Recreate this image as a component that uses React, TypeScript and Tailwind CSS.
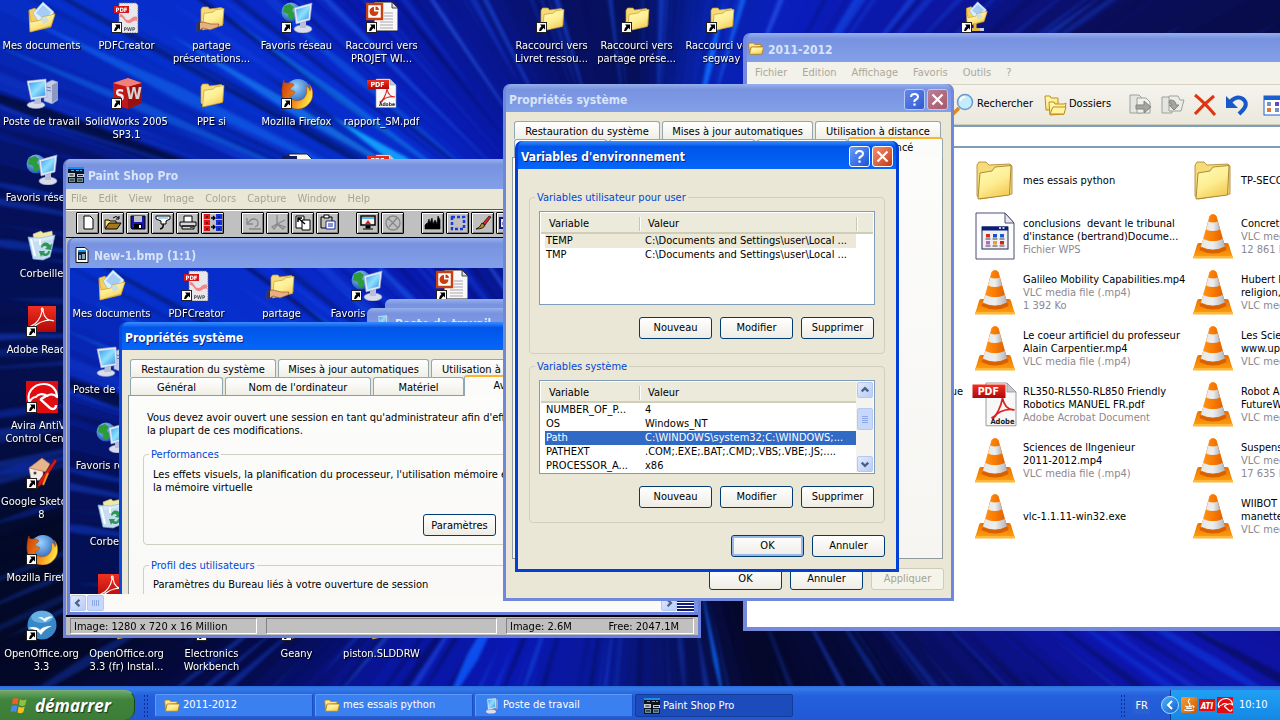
import React from "react";
import { clsx } from "clsx";

/* ---------- wallpaper ---------- */

const CX = 650;
const CY = 340;

const tones: [number, number, number, number][] = [
  [0, 8, 12, 90],
  [22, 16, 16, 150],
  [34, 14, 22, 178],
  [46, 10, 16, 110],
  [56, 5, 10, 60],
  [72, 5, 8, 42],
  [86, 8, 18, 100],
  [98, 8, 24, 150],
  [112, 10, 24, 180],
  [126, 9, 22, 160],
  [138, 5, 12, 80],
  [150, 4, 8, 40],
  [160, 3, 10, 40],
  [170, 4, 14, 70],
  [182, 4, 16, 84],
  [192, 5, 16, 90],
  [200, 6, 34, 170],
  [208, 6, 48, 205],
  [216, 8, 44, 205],
  [226, 8, 26, 175],
  [240, 8, 22, 140],
  [252, 7, 16, 100],
  [266, 6, 16, 90],
  [280, 8, 34, 170],
  [294, 10, 30, 190],
  [312, 12, 22, 160],
  [326, 10, 14, 90],
  [340, 6, 10, 60],
  [360, 8, 12, 90],
];

const glints: [number, number, string, number, number, number][] = [
  [213, 2.4, "#12a8ff", 170, 380, 0.9],
  [211, 1.4, "#1a8cf8", 200, 560, 0.6],
  [216, 1.2, "#1080f8", 180, 520, 0.6],
  [206, 1.4, "#1268f0", 260, 700, 0.6],
  [203, 1, "#1270f0", 300, 720, 0.5],
  [220, 1.2, "#1066f0", 200, 520, 0.5],
  [225, 0.8, "#2060f0", 200, 600, 0.5],
  [209, 0.7, "#03104c", 250, 800, 0.5],
  [218, 0.6, "#04145c", 200, 800, 0.5],
  [199, 1.2, "#030a34", 400, 800, 0.8],
  [236, 0.7, "#2a5cf0", 180, 500, 0.6],
  [243, 0.8, "#1c50e8", 180, 500, 0.6],
  [254, 0.8, "#1a4ae8", 200, 420, 0.6],
  [263, 0.8, "#1a50e8", 200, 420, 0.5],
  [272, 1, "#1848e0", 180, 420, 0.6],
  [283, 1.4, "#0d6cff", 180, 330, 0.9],
  [286, 1, "#1470ff", 220, 420, 0.7],
  [292, 1, "#2a54e8", 220, 500, 0.6],
  [303, 1.4, "#1248e0", 220, 500, 0.6],
  [309, 1, "#1a50e8", 280, 560, 0.5],
  [79, 0.8, "#0d68ff", 260, 400, 0.8],
  [62, 0.7, "#1a3cc0", 260, 500, 0.6],
  [118, 1.8, "#0d5cff", 270, 450, 0.8],
  [109, 0.8, "#1450e8", 270, 420, 0.5],
  [97, 0.6, "#1a44e0", 270, 420, 0.5],
  [123, 0.8, "#2048e0", 300, 500, 0.6],
  [130, 0.6, "#2458e8", 300, 500, 0.5],
  [35, 0.7, "#0c34d8", 450, 800, 0.6],
  [31, 0.8, "#0c38e0", 450, 800, 0.6],
  [167, 0.8, "#1038d0", 560, 700, 0.6],
  [163, 0.6, "#0c2cb0", 560, 700, 0.5],
  [172, 0.8, "#0c30c0", 560, 700, 0.5],
  [187, 0.8, "#1040d0", 560, 700, 0.5],
  [192, 0.6, "#0c3cd0", 560, 700, 0.5],
];

function toneAt(deg: number) {
  const i = Math.max(
    1,
    tones.findIndex((t) => t[0] >= deg),
  );
  const a = tones[i - 1];
  const b = tones[i];
  const k = (deg - a[0]) / (b[0] - a[0]);
  const c = [1, 2, 3].map((n) => Math.round(a[n] + (b[n] - a[n]) * k));
  return `rgb(${c[0]},${c[1]},${c[2]})`;
}

function ray(deg: number, width: number, r0: number, r1: number) {
  const p = (d: number, r: number) => {
    const t = (d * Math.PI) / 180;
    return `${(CX + Math.cos(t) * r).toFixed(1)},${(CY + Math.sin(t) * r).toFixed(1)}`;
  };
  const h = width / 2;
  return [p(deg, r0), p(deg - h, r0 + (r1 - r0) * 0.6), p(deg, r1), p(deg + h, r0 + (r1 - r0) * 0.6)].join(" ");
}

const noise = (n: number) => {
  const s = Math.sin(n * 91.17) * 43758.5453;
  return s - Math.floor(s);
};

function Wallpaper() {
  return (
    <svg
      viewBox="0 0 1280 720"
      preserveAspectRatio="xMidYMid slice"
      className="absolute inset-0 h-full w-full bg-[#06104c]"
      aria-hidden="true"
    >
      {Array.from({ length: 180 }, (_, i) => {
        const d = i * 2;
        const t0 = ((d - 0.3) * Math.PI) / 180;
        const t1 = ((d + 2.3) * Math.PI) / 180;
        return (
          <polygon
            key={i}
            fill={toneAt(d)}
            points={`${CX},${CY} ${CX + 1000 * Math.cos(t0)},${CY + 1000 * Math.sin(t0)} ${CX + 1000 * Math.cos(t1)},${CY + 1000 * Math.sin(t1)}`}
          />
        );
      })}
      <g className="blur-[1.5px]">
        {Array.from({ length: 330 }, (_, i) => {
          const r0 = 170 + noise(i + 7) * 380;
          return (
            <polygon
              key={i}
              points={ray(i * 1.09 + noise(i), 0.3 + noise(i + 50) * 0.8, r0, r0 + 120 + noise(i + 90) * 300)}
              fill={noise(i + 200) > 0.5 ? "#1a50f0" : "#02062c"}
              opacity={0.2 + noise(i + 33) * 0.22}
            />
          );
        })}
        {glints.map(([d, w, c, a, b, o]) => (
          <polygon key={d} points={ray(d, w, a, b)} fill={c} opacity={o} />
        ))}
      </g>
    </svg>
  );
}

/* ---------- icons ---------- */

type IconProps = { className?: string };

function Svg({ className, box = 32, children }: IconProps & { box?: number; children: React.ReactNode }) {
  return (
    <svg viewBox={`0 0 ${box} ${box}`} className={clsx("shrink-0", className)} aria-hidden="true">
      {children}
    </svg>
  );
}

function SharedPaints() {
  return (
    <svg className="absolute h-0 w-0" aria-hidden="true">
      <defs>
        <linearGradient id="gold" x1="0" y1="0" x2="0.5" y2="1">
          <stop offset="0" stopColor="#fffcb8" />
          <stop offset="0.6" stopColor="#fdee94" />
          <stop offset="1" stopColor="#f4cf5c" />
        </linearGradient>
        <linearGradient id="screen" x1="0" y1="0" x2="1" y2="1">
          <stop offset="0" stopColor="#3c9ce8" />
          <stop offset="0.5" stopColor="#8ee0ff" />
          <stop offset="1" stopColor="#3a90e0" />
        </linearGradient>
        <radialGradient id="globe" cx="0.4" cy="0.3" r="0.8">
          <stop offset="0" stopColor="#9cd4ff" />
          <stop offset="1" stopColor="#0c48a8" />
        </radialGradient>
        <linearGradient id="fox" x1="0" y1="0" x2="1" y2="0.4">
          <stop offset="0" stopColor="#c83c08" />
          <stop offset="0.6" stopColor="#f08818" />
          <stop offset="1" stopColor="#ffe040" />
        </linearGradient>
        <linearGradient id="cone" x1="0" y1="0" x2="1" y2="0">
          <stop offset="0" stopColor="#ff9820" />
          <stop offset="0.5" stopColor="#fa7c00" />
          <stop offset="1" stopColor="#d85a00" />
        </linearGradient>
        <linearGradient id="coneBase" x1="0" y1="0" x2="0" y2="1">
          <stop offset="0" stopColor="#e87000" />
          <stop offset="1" stopColor="#ffa010" />
        </linearGradient>
        <linearGradient id="coneWhite" x1="0" y1="0" x2="1" y2="0">
          <stop offset="0" stopColor="#e4e8ec" />
          <stop offset="0.5" stopColor="#eeeeee" />
          <stop offset="1" stopColor="#b0b4bc" />
        </linearGradient>
        <linearGradient id="redPaint" x1="0" y1="0" x2="0" y2="1">
          <stop offset="0" stopColor="#f03020" />
          <stop offset="1" stopColor="#b00808" />
        </linearGradient>
        <linearGradient id="java" x1="0" y1="0" x2="1" y2="1">
          <stop offset="0" stopColor="#f8a030" />
          <stop offset="1" stopColor="#c85808" />
        </linearGradient>
      </defs>
    </svg>
  );
}

const folderShape = (
  <>
    <path d="M5 9.500 6.500 7h5.500l1.500 2 12-1.500 1.500 1.500v15L7 28 5 26z" fill="#f5dc78" stroke="#c89c30" strokeWidth="0.7" />
    <path d="M8 13.500 17.500 12l1.500-2 9-1.500-1.500 17L6.500 30z" fill="url(#gold)" stroke="#c89c30" strokeWidth="0.7" />
  </>
);

const FolderIcon = (p: IconProps) => <Svg {...p}>{folderShape}</Svg>;

const LargeFolderIcon = (p: IconProps) => (
  <Svg box={48} {...p}>
    <path d="M6 9 8 6h7l3 3 21-1 2 2v28L9 43 6 40z" fill="#f5dc78" stroke="#a88028" strokeWidth="0.8" />
    <path d="M9 17 21 15l3-4 16-1.500-1.500 29.500L7 43z" fill="url(#gold)" stroke="#a88028" strokeWidth="0.9" />
  </Svg>
);

const SmallFolder = (p: IconProps) => (
  <Svg box={16} {...p}>
    <path d="M.7 3.500Q.7 2 2 2h3.500l1.300 1.500H13v2.200L3 6.500 1.600 13z" fill="#ffe48a" stroke="#b07c18" strokeWidth="0.8" />
    <path d="M1.500 13.300 3.200 6h11.600q.8 0 .5 1l-1.500 6.300z" fill="url(#gold)" stroke="#b07c18" strokeWidth="0.8" />
  </Svg>
);

const docsShape = (
  <>
    <path d="M3 9l6-2 2 3 18 3-4 13L4 31z" fill="#f5cf60" stroke="#c89020" strokeWidth="0.6" />
    <path d="M7 12 17 1l11 10-4 10-9 4z" fill="#dcefff" stroke="#88b4e0" strokeWidth="0.6" />
    <path d="M10 12 17 4l8 7-6 8z" fill="#a4ccf4" />
    <path d="M3 10l2 11 10-2 1-3 13-3-4 12L4 31z" fill="url(#gold)" stroke="#c89020" strokeWidth="0.6" />
    <path d="m15 17 5-2 3 5-6 3z" fill="#b8dcf8" opacity="0.7" />
  </>
);

const DocsIcon = (p: IconProps) => <Svg {...p}>{docsShape}</Svg>;

const NetDocsIcon = (p: IconProps) => (
  <Svg {...p}>
    <g transform="translate(3 0) scale(.8)">{docsShape}</g>
    <path d="M14 22v6M9 28.500h12" stroke="#e0b840" strokeWidth="3" />
    <path d="M19 28.500h4" stroke="#c8d0dc" strokeWidth="3" />
  </Svg>
);

const PdfCreatorIcon = (p: IconProps) => (
  <Svg {...p}>
    <path d="M8 2h17l2 2v28H8z" fill="#e8e8ec" stroke="#707078" strokeDasharray="1.5 1" strokeWidth="1" />
    <path d="M9 13c5 0 4 6 8 6s4-5 9-3v4c-4-2-5 3-9 2s-4-6-8-6z" fill="#f08888" />
    <rect x="3" y="5" width="15" height="7" fill="#d81818" />
    <text x="10.500" y="10.900" textAnchor="middle" className="font-bold" fontSize="6" fill="#fff">PDF</text>
    <text x="18.500" y="30" textAnchor="middle" className="font-bold" fontSize="5" fill="#505058">PWP</text>
  </Svg>
);

const ShareFolderIcon = (p: IconProps) => (
  <Svg {...p}>
    <g transform="translate(0 -1)">{folderShape}</g>
    <path d="M1 22l6-1 8 2h8l-1 3-8 3-7-2-6 4z" fill="#e8b080" stroke="#804818" strokeWidth="0.6" />
    <path d="M1 21h3v10H1z" fill="#303848" />
  </Svg>
);

const NetworkIcon = (p: IconProps) => (
  <Svg {...p}>
    <circle cx="10" cy="11" r="9.500" fill="url(#globe)" />
    <path d="M3 5l6-2 4 3-2 4 3 3-3 6-3-1-1-5-5-2z" fill="#2c9c38" />
    <ellipse cx="22" cy="28" rx="9" ry="4" fill="#d8dcec" stroke="#9098b8" strokeWidth="0.6" />
    <path d="M19 20l6-1v8h-6z" fill="#b8c0d8" />
    <path d="M13 7l18-5-2 17-14 4z" fill="#e4e8f8" stroke="#98a4c8" strokeWidth="0.6" />
    <path d="M15 8.500 29 4.500 27.500 17.500 16.500 20.500z" fill="url(#screen)" />
  </Svg>
);

const PptIcon = (p: IconProps) => (
  <Svg {...p}>
    <path d="M8 1h18l6 6v23H8z" fill="#f8f8f8" stroke="#202020" />
    <path d="M26 1v6h6z" fill="#d8d8e0" stroke="#202020" strokeWidth="0.8" />
    <path d="M18 12h9M18 15h9M18 18h9M14 21h13M14 24h13M14 27h13" stroke="#a8a8b0" />
    <rect x="1" y="3" width="15" height="15" fill="#fff" stroke="#c84010" strokeWidth="2.500" />
    <path d="M8 6a4.500 4.500 0 1 0 4.500 4.500H8z" fill="#c84010" />
    <path d="M9.500 5.500a4 4 0 0 1 3.500 3.500H9.500z" fill="#c84010" />
  </Svg>
);

const WordIcon = (p: IconProps) => (
  <Svg {...p}>
    <path d="M8 1h18l6 6v23H8z" fill="#f8f8f8" stroke="#202020" />
    <path d="M1 3h15v15H1z" fill="#101c60" />
  </Svg>
);

const ComputerIcon = (p: IconProps) => (
  <Svg {...p}>
    <path d="M18 7l8-4 6 2v18l-6 4-8-3z" fill="#c4cce8" stroke="#7c88b0" strokeWidth="0.6" />
    <path d="M26 8v18l6-4V5z" fill="#8c98c4" />
    <path d="M20 10l5 1M20 13l5 1" stroke="#6878a8" />
    <ellipse cx="10" cy="28" rx="9" ry="3.500" fill="#d8dcec" stroke="#9098b8" strokeWidth="0.6" />
    <path d="M9 20h6v7H8z" fill="#b8c0d8" />
    <path d="M1 4l19-2 1 18-16 3z" fill="#e4e8f8" stroke="#98a4c8" strokeWidth="0.6" />
    <path d="M3 6l15.500-2 1 14.500L6 20.500z" fill="url(#screen)" />
  </Svg>
);

const SmallComputer = (p: IconProps) => (
  <Svg box={16} {...p}>
    <ellipse cx="7" cy="13.500" rx="5" ry="2" fill="#d8dcec" />
    <path d="M3 1l9-1v10l-8 2z" fill="#e4e8f8" stroke="#7c90c8" strokeWidth="0.5" />
    <path d="M4 2l7-1v8l-6 1.500z" fill="url(#screen)" />
    <path d="M12 1l2 1v8l-2 2z" fill="#90a0cc" />
  </Svg>
);

const SolidWorksIcon = (p: IconProps) => (
  <Svg {...p}>
    <path d="M2 6 17 1l14 5v20l-14 6L2 27z" fill="#c01818" />
    <path d="M2 6 17 1l14 5-14 4z" fill="#f08078" />
    <path d="M17 10 31 6v20l-14 6z" fill="#981010" />
    <text x="4" y="24" fontSize="15" className="font-bold" fill="#f4f0f0">S</text>
    <text x="15" y="22" fontSize="16" className="font-bold" fill="#d8d4d4">W</text>
  </Svg>
);

const FirefoxIcon = (p: IconProps) => (
  <Svg {...p}>
    <circle cx="17" cy="15" r="13" fill="url(#globe)" />
    <path
      d="M3 3c0 3 1 3 4 3 2 0 5 0 6 2-1 2-4 2-4 5 1 1 4 0 5 2-1 3-4 3-5 4 1 4 6 6 11 4 5-2 7-8 5-14 3 2 4 3 4 5 1-3 0-5-1-7 4 4 5 11 2 17-3 5-8 8-13 8C8 32 1 25 1 15 1 10 2 5 3 3z"
      fill="url(#fox)"
      stroke="#b84408"
      strokeWidth="0.5"
    />
  </Svg>
);

const PdfIcon = (p: IconProps) => (
  <Svg {...p}>
    <path d="M10 2h14l6 6v22.500H10z" fill="#f8f8f8" stroke="#909098" strokeWidth="0.6" />
    <path d="M24 2v6h6z" fill="#c8c8d0" stroke="#909098" strokeWidth="0.5" />
    <path
      d="M14 25c3-1 6-7 7-13-2-2 0-3 0 0 1 5 4 8 8 8-3-1-9 0-12 3-1 2-3 3-3 2z"
      fill="none"
      stroke="#e02020"
      strokeWidth="1.100"
    />
    <rect x="1" y="3" width="22" height="9" fill="url(#redPaint)" />
    <text x="11.500" y="10" textAnchor="middle" fontSize="7" className="font-bold" fill="#fff">PDF</text>
    <text x="29" y="29" textAnchor="end" fontSize="5" className="font-bold" fill="#202020">Adobe</text>
  </Svg>
);

const RecycleIcon = (p: IconProps) => (
  <Svg {...p}>
    <path d="M7 5l8-3 2 2 9-2 1 8-19 3z" fill="#f0e8a8" stroke="#c0b878" strokeWidth="0.5" />
    <path d="M2 8l12 1 15-3-5 22-7 3-10-1z" fill="#d4ecfc" stroke="#88b8e0" strokeWidth="0.7" opacity="0.93" />
    <path d="M5 10l4 17M14 10v6" stroke="#f8fcff" strokeWidth="2" />
    <path d="M15 18c1-5 6-6 9-2l2-1-1 6-6-1 2-2c-2-2-4-1-5 1zM24 22c0 5-5 6-8 4l-1 2-2-6 6 0-1 2c2 1 4 0 4-2z" fill="#2c9850" />
  </Svg>
);

const AcrobatIcon = (p: IconProps) => (
  <Svg {...p}>
    <rect x="2" y="1" width="28" height="26" fill="url(#redPaint)" />
    <path d="M5 21c6-2 10-9 11-15-2-4 2-4 1 0 1 6 5 10 11 10-5-2-13 0-18 4-2 2-4 3-5 1z" fill="none" stroke="#fff" strokeWidth="1.200" />
  </Svg>
);

const AviraIcon = (p: IconProps) => (
  <Svg {...p}>
    <rect width="32" height="32" fill="#e00c10" />
    <path
      d="M3.500 21C0 12 7 3 18 3c8 0 13 6 13 13-3-3-7-3-10-1-4-3-9-2-11 1-3 0-5 2-6.500 5z"
      fill="none"
      stroke="#fff"
      strokeWidth="2.200"
      strokeLinejoin="round"
    />
    <path d="M20 15c-3 2-6 3-5 4l9 8c3 2 6 1 6-3" fill="none" stroke="#fff" strokeWidth="2.400" />
  </Svg>
);

const SketchUpIcon = (p: IconProps) => (
  <Svg {...p}>
    <path d="M3 11 13 5l4 7v12L5 22z" fill="#f4ece4" stroke="#a89888" strokeWidth="0.7" />
    <path d="M3 11 16 1l8 6-4 8z" fill="#e8b48c" stroke="#a86c48" strokeWidth="0.7" />
    <circle cx="9" cy="16" r="1.500" fill="#504038" />
    <path d="m29 2 2 2-15 23-5 4 2-7z" fill="#d81818" stroke="#601008" strokeWidth="0.6" />
    <path d="m22 16-5 12" stroke="#e89020" strokeWidth="2" />
  </Svg>
);

const OpenOfficeIcon = (p: IconProps) => (
  <Svg {...p}>
    <circle cx="16" cy="16" r="14.500" fill="#3888c8" />
    <ellipse cx="16" cy="8" rx="11" ry="6" fill="#68b0e0" />
    <path d="M12 9c3-2 5-1 6 1 2-2 5-3 9-2-4 1-6 3-8 5-2-2-4-4-7-4zM2 19c5-2 10-1 12 2 3-3 6-4 12-4-5 2-9 5-11 9-3-4-7-6-13-7z" fill="#fff" />
  </Svg>
);

const ConeIcon = (p: IconProps) => (
  <Svg box={48} {...p}>
    <path d="M10 31h28q1.500 0 2 2l4 13H4l4-13q.5-2 2-2z" fill="url(#coneBase)" />
    <path d="M4 44h40v2.500H4z" fill="#ffb838" />
    <path d="M20.500 4Q24 0 27.500 4l9 32q-12 6-25 0z" fill="url(#cone)" />
    <path d="M19.300 9.500q4.700 2 9.400 0l2.300 8q-7 3-14 0z" fill="url(#coneWhite)" />
    <path d="M14.300 27q9.700 4.500 19.400 0l2.300 7.500q-12 6-24 0z" fill="url(#coneWhite)" />
    <path d="M11.800 35q12.200 6 24.400 0l1.300 3q-13.500 7-27 0z" fill="#d86000" />
  </Svg>
);

const WpsIcon = (p: IconProps) => (
  <Svg box={48} {...p}>
    <path d="M5 1h29l9 10v36H5z" fill="#fdfdff" stroke="#4c5070" />
    <path d="M34 1v10h9z" fill="#e8e8f0" stroke="#4c5070" />
    <rect x="11" y="15" width="26" height="22" fill="#f0f0f4" stroke="#202848" />
    <rect x="11" y="14.500" width="26" height="4" fill="#081c80" />
    <path d="M28 16h2M31.500 16h2" stroke="#fff" strokeWidth="1.500" />
    {[
      ["#d03018", "#1850c8", "#1860d0"],
      ["#c060d0", "#e8a030", "#d02020"],
    ].map((row, y) =>
      row.map((c, x) => (
        <g key={`${x}${y}`}>
          <rect x={15 + x * 7} y={22 + y * 7} width="4" height="3.500" fill={c} />
          <path d={`M${14.5 + x * 7} ${27 + y * 7}h5`} stroke="#404048" />
        </g>
      )),
    )}
  </Svg>
);

const PspIcon = (p: IconProps) => (
  <Svg box={16} {...p}>
    <rect width="16" height="16" fill="#0c1420" />
    <path d="M0 0h16v2H0z" fill="#1890f0" />
    <path d="M3 3h3v1H3zM8 3h3v1H8zM12 3h2v1h-2z" fill="#38b0ff" />
    <path d="M0 6h7v4H0zM9 7h7v3H9z" fill="#c8ccd0" />
    <path d="M1.500 7.500h4v1h-4zM10 8h5v1h-5z" fill="#101828" />
    <path d="M1 11h6v4H1zM9 11h6v4H9z" fill="#6c8c98" />
    <path d="M2 12.500h4v1H2zM10 12.500h4v1h-4z" fill="#0c1420" />
  </Svg>
);

const BmpIcon = (p: IconProps) => (
  <Svg box={16} {...p}>
    <path d="M2 .5h9l3 3v12H2z" fill="#fff" stroke="#101010" />
    <rect x="4" y="3" width="8" height="10" fill="#102038" />
    <path d="M4 3h8v2H4z" fill="#1890f0" />
    <path d="M5 8h2v4H5zM8 7h3v5H8z" fill="#88a8b8" />
  </Svg>
);

function ShortcutArrow() {
  return (
    <svg viewBox="0 0 11 11" className="absolute bottom-0 left-0 h-[11px] w-[11px]" aria-hidden="true">
      <rect x=".5" y=".5" width="10" height="10" fill="#fff" stroke="#202020" />
      <path d="M4 2.500h5v5L7.400 6 5 9H3q0-3 2.500-4.800z" fill="#000" />
    </svg>
  );
}

/* ---------- desktop icons ---------- */

type DesktopItem = { col: number; row: number; label?: string; icon: React.FC<IconProps>; link?: boolean };

const desktopItems: DesktopItem[] = [
  { col: 0, row: 0, label: "Mes documents", icon: DocsIcon },
  { col: 1, row: 0, label: "PDFCreator", icon: PdfCreatorIcon, link: true },
  { col: 2, row: 0, label: "partage\nprésentations...", icon: ShareFolderIcon },
  { col: 3, row: 0, label: "Favoris réseau", icon: NetworkIcon, link: true },
  { col: 4, row: 0, label: "Raccourci vers\nPROJET WI...", icon: PptIcon, link: true },
  { col: 6, row: 0, label: "Raccourci vers\nLivret ressou...", icon: FolderIcon, link: true },
  { col: 7, row: 0, label: "Raccourci vers\npartage prése...", icon: FolderIcon, link: true },
  { col: 8, row: 0, label: "Raccourci vers\nsegway", icon: FolderIcon, link: true },
  { col: 11, row: 0, icon: NetDocsIcon, link: true },
  { col: 0, row: 1, label: "Poste de travail", icon: ComputerIcon },
  { col: 1, row: 1, label: "SolidWorks 2005\nSP3.1", icon: SolidWorksIcon, link: true },
  { col: 2, row: 1, label: "PPE si", icon: FolderIcon },
  { col: 3, row: 1, label: "Mozilla Firefox", icon: FirefoxIcon, link: true },
  { col: 4, row: 1, label: "rapport_SM.pdf", icon: PdfIcon },
  { col: 0, row: 2, label: "Favoris réseau", icon: NetworkIcon },
  { col: 3, row: 2, icon: WordIcon },
  { col: 4, row: 2, icon: PdfIcon },
  { col: 0, row: 3, label: "Corbeille", icon: RecycleIcon },
  { col: 0, row: 4, label: "Adobe Reader", icon: AcrobatIcon, link: true },
  { col: 0, row: 5, label: "Avira AntiVir\nControl Center", icon: AviraIcon, link: true },
  { col: 0, row: 6, label: "Google Sketch...\n8", icon: SketchUpIcon, link: true },
  { col: 0, row: 7, label: "Mozilla Firefox", icon: FirefoxIcon, link: true },
  { col: 0, row: 8, label: "OpenOffice.org\n3.3", icon: OpenOfficeIcon, link: true },
  { col: 1, row: 8, label: "OpenOffice.org\n3.3 (fr) Instal...", icon: FolderIcon },
  { col: 2, row: 8, label: "Electronics\nWorkbench", icon: AcrobatIcon, link: true },
  { col: 3, row: 8, label: "Geany", icon: DocsIcon, link: true },
  { col: 4, row: 8, label: "piston.SLDDRW", icon: FolderIcon },
];

const capturedItems: DesktopItem[] = [
  { col: 0, row: 0, label: "Mes documents", icon: DocsIcon },
  { col: 1, row: 0, label: "PDFCreator", icon: PdfCreatorIcon, link: true },
  { col: 2, row: 0, label: "partage", icon: ShareFolderIcon },
  { col: 3, row: 0, label: "Favoris réseau", icon: NetworkIcon, link: true },
  { col: 4, row: 0, icon: PptIcon, link: true },
  { col: 0, row: 1, label: "Poste de travail", icon: ComputerIcon },
  { col: 0, row: 2, label: "Favoris réseau", icon: NetworkIcon },
  { col: 0, row: 3, label: "Corbeille", icon: RecycleIcon },
  { col: 0, row: 4, icon: AcrobatIcon },
];

function DesktopIcons({ items }: { items: DesktopItem[] }) {
  return (
    <>
      {items.map(({ col, row, label, icon: Icon, link }) => (
        <div
          key={`${col}-${row}`}
          className="absolute flex w-[85px] flex-col items-center gap-1.5 pt-px"
          style={{ left: col * 85 - 1, top: row * 76 }}
        >
          <div className="relative h-8 w-8">
            <Icon className="h-8 w-8" />
            {link && <ShortcutArrow />}
          </div>
          {label && (
            <span className="text-center leading-[13px] whitespace-pre text-white [text-shadow:1px_1px_1px_#000]">
              {label}
            </span>
          )}
        </div>
      ))}
    </>
  );
}

/* ---------- window parts ---------- */

function TitleButton({ kind, active }: { kind: "help" | "close"; active: boolean }) {
  return (
    <button
      type="button"
      aria-label={kind === "help" ? "Aide" : "Fermer"}
      className={clsx(
        "flex h-[21px] w-[21px] items-center justify-center rounded-[3px] border",
        active ? "border-white" : "border-[#b8c8f4]",
        kind === "help" && (active ? "bg-linear-to-br from-[#6a9cf8] to-[#1c50d8]" : "bg-linear-to-br from-[#6088ec] to-[#3458d0]"),
        kind === "close" && (active ? "bg-linear-to-br from-[#f09070] to-[#c83410]" : "bg-linear-to-br from-[#b88098] to-[#a85868]"),
      )}
    >
      <svg viewBox="0 0 15 15" className="h-[15px] w-[15px]" aria-hidden="true">
        {kind === "help" ? (
          <>
            <path d="M4 5q0-3 3.500-3T11 4.800Q11 6.500 9 7.500T7.500 10" fill="none" stroke="#fff" strokeWidth="2" />
            <rect x="6.400" y="11.500" width="2.200" height="2.200" fill="#fff" />
          </>
        ) : (
          <path d="m2.500 2.500 10 10m0-10-10 10" stroke="#fff" strokeWidth="2.200" />
        )}
      </svg>
    </button>
  );
}

function TitleBar({
  title,
  icon,
  active = false,
  controls = false,
  className,
}: {
  title?: string;
  icon?: React.ReactNode;
  active?: boolean;
  controls?: boolean;
  className?: string;
}) {
  return (
    <header
      className={clsx(
        "flex h-7 shrink-0 items-center gap-1 rounded-t-[6px] pt-0.5",
        active
          ? "bg-linear-to-b from-[#3a8cff] via-[#0055e8] via-20% to-[#0566fa]"
          : "bg-linear-to-b from-[#96b0ec] via-[#7892e0] via-20% to-[#82a0e8]",
        className,
      )}
    >
      {icon}
      <h2
        className={clsx(
          "grow pt-0.5 text-[12px] font-bold whitespace-nowrap",
          active ? "text-white [text-shadow:1px_1px_#0a1e80]" : "text-[#d8e4f8]",
        )}
      >
        {title}
      </h2>
      {controls && (
        <div className="flex gap-0.5">
          <TitleButton kind="help" active={active} />
          <TitleButton kind="close" active={active} />
        </div>
      )}
    </header>
  );
}

function XpButton({
  children,
  isDefault,
  disabled,
}: {
  children: React.ReactNode;
  isDefault?: boolean;
  disabled?: boolean;
}) {
  return (
    <button
      type="button"
      disabled={disabled}
      className={clsx(
        "h-[22px] w-[73px] rounded-[3px] border bg-linear-to-b pt-px",
        disabled
          ? "border-[#cfccba] from-[#f5f4ea] to-[#f5f4ea] text-[#a5a394]"
          : "border-[#003c74] from-white to-[#eeece4] text-black",
        isDefault && "shadow-[inset_0_0_0_2px_#98b8ea]",
      )}
    >
      {children}
    </button>
  );
}

function Group({ title, className, children }: { title: string; className?: string; children: React.ReactNode }) {
  return (
    <fieldset className={clsx("rounded-[4px] border border-[#d0d0bf]", className)}>
      <legend className="-ml-1 px-0.5 leading-[13px] text-[#0046d5]">{title}</legend>
      {children}
    </fieldset>
  );
}

function ScrollArrow({ dir, className }: { dir: "up" | "down" | "left" | "right"; className?: string }) {
  const d = {
    up: "m4 9 3.500-3.500L11 9",
    down: "m4 6 3.500 3.500L11 6",
    left: "M9 4 5.500 7.500 9 11",
    right: "m6 4 3.500 3.500L6 11",
  }[dir];
  return (
    <button
      type="button"
      aria-label={dir}
      className={clsx("h-4 w-4 rounded-[2px] border border-[#b4c8f0] bg-linear-to-br from-[#e0eafe] to-[#b8ccf8]", className)}
    >
      <svg viewBox="0 0 15 15" className="h-full w-full" aria-hidden="true">
        <path d={d} fill="none" stroke="#4d6185" strokeWidth="2.500" />
      </svg>
    </button>
  );
}

/* ---------- system properties ---------- */

const tabStyle = "h-full rounded-t-[3px] border border-b-0 border-[#91a7b4] bg-linear-to-b from-white to-[#f0efe6] pt-0.5";

function SystemProperties({ active, className, children }: { active: boolean; className?: string; children?: React.ReactNode }) {
  return (
    <section
      className={clsx(
        "absolute w-[451px] rounded-t-[7px] border-x-3 border-b-3",
        active ? "border-[#0a48dc] bg-[#0a48dc]" : "border-[#7088dc] bg-[#7088dc]",
        className,
      )}
    >
      <TitleBar title="Propriétés système" active={active} controls className="px-[3px]" />
      <div className="bg-[#ebe7d7] pt-[9px] pr-2 pb-2 pl-1.5">
        <div className="flex h-[18px] gap-0.5 pl-0.5" role="tablist">
          <button type="button" role="tab" className={clsx(tabStyle, "w-[146px]")}>Restauration du système</button>
          <button type="button" role="tab" className={clsx(tabStyle, "w-[151px]")}>Mises à jour automatiques</button>
          <button type="button" role="tab" className={clsx(tabStyle, "w-[126px]")}>Utilisation à distance</button>
        </div>
        <div className="flex h-[18px] pl-0.5" role="tablist">
          <button type="button" role="tab" className={clsx(tabStyle, "mr-0.5 w-[93px]")}>Général</button>
          <button type="button" role="tab" className={clsx(tabStyle, "mr-0.5 w-[146px]")}>Nom de l'ordinateur</button>
          <button type="button" role="tab" className={clsx(tabStyle, "w-[91px]")}>Matériel</button>
          <button
            type="button"
            role="tab"
            aria-selected="true"
            className="relative -mt-0.5 -mb-px grow rounded-t-[3px] border-x border-t-2 border-x-[#91a7b4] border-t-[#ffb428] bg-[#fbfbf9]"
          >
            Avancé
          </button>
        </div>
        <div className="min-h-[402px] border border-[#919b9c] bg-linear-to-b from-[#fcfcfb] to-[#f6f5f2] px-3.5 pt-[15px]">{children}</div>
        {!children && (
          <div className="-mr-px mt-[9px] flex justify-end gap-2">
            <XpButton>OK</XpButton>
            <XpButton>Annuler</XpButton>
            <XpButton disabled>Appliquer</XpButton>
          </div>
        )}
      </div>
    </section>
  );
}

function AdvancedPage() {
  return (
    <div className="leading-[13px]">
      <p className="pl-1">
        Vous devez avoir ouvert une session en tant qu'administrateur afin d'effectuer
        <br />
        la plupart de ces modifications.
      </p>
      <Group title="Performances" className="mt-[11px] px-[9px] pb-2">
        <p className="mt-[7px]">
          Les effets visuels, la planification du processeur, l'utilisation mémoire et
          <br />
          la mémoire virtuelle
        </p>
        <div className="mt-5 mr-[38px] flex justify-end">
          <XpButton>Paramètres</XpButton>
        </div>
      </Group>
      <Group title="Profil des utilisateurs" className="mt-3.5 px-[9px] pb-9">
        <p className="mt-1.5">Paramètres du Bureau liés à votre ouverture de session</p>
      </Group>
    </div>
  );
}

/* ---------- environment variables ---------- */

const userVars = [
  ["TEMP", "C:\\Documents and Settings\\user\\Local ..."],
  ["TMP", "C:\\Documents and Settings\\user\\Local ..."],
];

const systemVars = [
  ["NUMBER_OF_P...", "4"],
  ["OS", "Windows_NT"],
  ["Path", "C:\\WINDOWS\\system32;C:\\WINDOWS;..."],
  ["PATHEXT", ".COM;.EXE;.BAT;.CMD;.VBS;.VBE;.JS;...."],
  ["PROCESSOR_A...", "x86"],
];

function VarList({
  rows,
  marked,
  markClass,
  scroll,
}: {
  rows: string[][];
  marked: string;
  markClass: string;
  scroll?: boolean;
}) {
  const head = "h-[21px] border-b-2 border-[#d0cdb9] bg-[#ebeadb] p-0 pt-0.5 text-left font-normal";
  return (
    <div className="mt-[7px] flex h-[94px] overflow-hidden border border-[#7f9db9] bg-white p-px">
      <table className="h-min grow table-fixed border-separate border-spacing-0 leading-[14px] whitespace-nowrap">
        <thead>
          <tr>
            <th scope="col" className={clsx(head, "w-[98px] pl-2")}>Variable</th>
            <th scope="col" className={clsx(head, "w-[217px]")}>
              <span className="block border-l border-[#c8c5b2] pl-2 shadow-[inset_1px_0_#fff]">Valeur</span>
            </th>
            {!scroll && (
              <td className={head}>
                <span className="block h-3.5 border-l border-[#c8c5b2] shadow-[inset_1px_0_#fff]" />
              </td>
            )}
          </tr>
        </thead>
        <tbody>
          {rows.map(([name, value]) => {
            const mark = name === marked && markClass;
            return (
              <tr key={name}>
                <td className={clsx("border-l-4 border-white bg-clip-padding p-0 pl-px", mark)}>{name}</td>
                <td className={clsx("p-0 pl-1.5", mark)}>{value}</td>
              </tr>
            );
          })}
        </tbody>
      </table>
      {scroll && (
        <div className="flex w-[17px] shrink-0 flex-col items-center bg-[#f4f3ee]">
          <ScrollArrow dir="up" />
          <div className="mt-2.5 flex h-[22px] w-4 flex-col items-center justify-center gap-px rounded-[2px] border border-[#b4c8f0] bg-[#c8d8fc]">
            <i className="h-px w-1.5 bg-[#8ca8e8]" />
            <i className="h-px w-1.5 bg-[#8ca8e8]" />
            <i className="h-px w-1.5 bg-[#8ca8e8]" />
            <i className="h-px w-1.5 bg-[#8ca8e8]" />
          </div>
          <ScrollArrow dir="down" className="mt-auto" />
        </div>
      )}
    </div>
  );
}

function ListButtons() {
  return (
    <div className="mt-3 mr-px flex justify-end gap-2">
      <XpButton>Nouveau</XpButton>
      <XpButton>Modifier</XpButton>
      <XpButton>Supprimer</XpButton>
    </div>
  );
}

function EnvironmentDialog() {
  return (
    <section
      className="absolute top-[141px] left-[515px] w-[384px] rounded-t-[7px] border-x-3 border-b-3 border-[#0040d8] bg-[#0040d8]"
      role="dialog"
      aria-label="Variables d'environnement"
    >
      <TitleBar title="Variables d'environnement" active controls className="px-[3px]" />
      <div className="bg-[#ebe7d7] px-[11px] pt-[22px] pb-3">
        <Group title="Variables utilisateur pour user" className="px-[9px] pb-3.5">
          <VarList rows={userVars} marked="TEMP" markClass="bg-[#ece9d8]" />
          <ListButtons />
        </Group>
        <Group title="Variables système" className="mt-1.5 px-[9px] pb-3.5">
          <VarList rows={systemVars} marked="Path" markClass="bg-[#316ac5] text-white" scroll />
          <ListButtons />
        </Group>
        <div className="mt-3 flex justify-end gap-2">
          <XpButton isDefault>OK</XpButton>
          <XpButton>Annuler</XpButton>
        </div>
      </div>
    </section>
  );
}

/* ---------- explorer ---------- */

type FileTile = { icon?: React.FC<IconProps>; name: string; info?: string };

const tiles: FileTile[] = [
  { name: "" },
  { icon: LargeFolderIcon, name: "mes essais python" },
  { icon: LargeFolderIcon, name: "TP-SECONDE" },
  { name: "" },
  { icon: WpsIcon, name: "conclusions  devant le tribunal\nd'instance (bertrand)Docume...", info: "Fichier WPS" },
  { icon: ConeIcon, name: "Concrete", info: "VLC media file (.mp4)\n12 861 Ko" },
  { name: "" },
  { icon: ConeIcon, name: "Galileo Mobility Capabilities.mp4", info: "VLC media file (.mp4)\n1 392 Ko" },
  { icon: ConeIcon, name: "Hubert Reeves\nreligion,", info: "VLC media file (.mp4)" },
  { name: "" },
  { icon: ConeIcon, name: "Le coeur artificiel du professeur\nAlain Carpentier.mp4", info: "VLC media file (.mp4)" },
  { icon: ConeIcon, name: "Les Sciences\nwww.up", info: "VLC media file (.mp4)" },
  { name: "ue\n \n " },
  { icon: PdfIcon, name: "RL350-RL550-RL850 Friendly\nRobotics MANUEL FR.pdf", info: "Adobe Acrobat Document" },
  { icon: ConeIcon, name: "Robot A\nFutureWorld", info: "VLC media file (.mp4)" },
  { name: "" },
  { icon: ConeIcon, name: "Sciences de lIngenieur\n2011-2012.mp4", info: "VLC media file (.mp4)" },
  { icon: ConeIcon, name: "Suspension", info: "VLC media file (.mp4)\n17 635 Ko" },
  { name: "" },
  { icon: ConeIcon, name: "vlc-1.1.11-win32.exe" },
  { icon: ConeIcon, name: "WIIBOT\nmanette", info: "VLC media file (.mp4)" },
];

function Explorer() {
  return (
    <section className="absolute top-[33px] -right-1 bottom-[55px] left-[743px] flex flex-col overflow-hidden rounded-tl-[7px] border-b-4 border-l-4 border-[#7488dc] bg-[#7488dc]">
      <TitleBar title="2011-2012" icon={<SmallFolder className="h-4 w-4" />} className="h-[29px] pl-px" />
      <nav className="flex h-[22px] shrink-0 items-center gap-[15px] bg-[#f2f1ea] pl-2 text-[#aca899]">
        {["Fichier", "Edition", "Affichage", "Favoris", "Outils", "?"].map((m) => (
          <span key={m}>{m}</span>
        ))}
      </nav>
      <div className="flex h-[41px] shrink-0 items-center border-y border-t-[#d8d4c4] border-b-[#d0ccbc] bg-linear-to-b from-[#f4f3ee] to-[#ebe9dc] pl-[204px]">
        <button type="button" className="flex items-center gap-0.5">
          <Svg box={24} className="h-6 w-6">
            <path d="m1 22 7-7" stroke="#e08820" strokeWidth="3.500" />
            <circle cx="14" cy="9" r="7.500" fill="#c4ecff" stroke="#6c98cc" strokeWidth="1.500" />
            <path d="M9 8q1-4 5-4" fill="none" stroke="#fff" strokeWidth="2" />
          </Svg>
          Rechercher
        </button>
        <button type="button" className="ml-2.5 flex items-center gap-0.5">
          <Svg box={24} className="h-6 w-6">
            <path d="M2 3h5l1 2h7v12H3z" fill="url(#gold)" stroke="#c08c20" />
            <path d="M6 9h5l1 2h9l2-1-2 11-14 1z" fill="url(#gold)" stroke="#c08c20" />
            <path d="m7 21 3-7h13l-2 7z" fill="#fff4a0" stroke="#c08c20" />
          </Svg>
          Dossiers
        </button>
        <i className="mr-2 ml-2.5 h-9 w-px bg-[#c8c5b4]" />
        <div className="flex items-center gap-2">
          <Svg box={24} className="h-6 w-6">
            <path d="M1 2h9l3 3v15H1z" fill="#e4e4e0" stroke="#a0a09c" />
            <path d="M8 5h9l4 4v11H8z" fill="#f0f0ec" stroke="#a0a09c" />
            <path d="M7 12h8V8l7 6-7 6v-4H7z" fill="#a4a4a0" stroke="#84847e" />
          </Svg>
          <Svg box={24} className="h-6 w-6">
            <path d="M1 4h7l3 2v14H1z" fill="#e4e4e0" stroke="#a0a09c" />
            <path d="M8 3h9l2 4h4l-3 11H8z" fill="#ececE8" stroke="#a0a09c" />
            <path d="M9 7q6 0 6 5h3l-5 5-5-5h3q0-2-3-2z" fill="#a4a4a0" stroke="#84847e" />
          </Svg>
          <Svg box={24} className="h-6 w-6">
            <path d="M2 2q10 8 20 20M21 3Q10 12 2 21" fill="none" stroke="#e03410" strokeWidth="3" />
          </Svg>
          <Svg box={24} className="h-6 w-6">
            <path d="M5 9q7-7 13-3 6 5-1 12l-3 3" fill="none" stroke="#1858c8" strokeWidth="4" />
            <path d="M1 3v12h12z" fill="#1858c8" />
          </Svg>
        </div>
        <i className="mx-[7px] h-9 w-px bg-[#c8c5b4]" />
        <Svg box={24} className="h-6 w-6">
          <rect x="1" y="3" width="22" height="19" fill="#fff" stroke="#1c60d0" />
          <path d="M1 3h22v4H1z" fill="#1c60d0" />
          <path d="M4 9h4v4H4zM12 15h4v4h-4z" fill="#7890c0" />
          <path d="M12 9h4v4h-4z" fill="#6848b8" />
          <path d="M4 15h4v4H4z" fill="#e07830" />
        </Svg>
      </div>
      <div className="h-[23px] shrink-0 border-y-2 border-[#7f9db9] bg-white" />
      <ul className="grid min-h-0 grow auto-rows-[56px] grid-cols-[218px_218px_218px] bg-white pt-1 pl-1.5">
        {tiles.map(({ icon: Icon, name, info }, i) => (
          <li key={i} className={clsx("flex items-center gap-1", !Icon && "justify-end pr-2")}>
            {Icon && <Icon className="h-12 w-12" />}
            <span className="leading-[13px] whitespace-pre">
              {name}
              {info && <span className="block text-[#8c8890]">{info}</span>}
            </span>
          </li>
        ))}
      </ul>
    </section>
  );
}

/* ---------- Paint Shop Pro ---------- */

const toolGroups: { name: string; art: React.ReactNode }[][] = [
  [
    { name: "New", art: <path d="M5 2h6l3 3v10H5z" fill="#fff" stroke="#000" /> },
    {
      name: "Open",
      art: (
        <>
          <path d="M1 14V6h4l1 1h6v3" fill="#f8e080" stroke="#000" />
          <path d="M1 15 5 9h12l-4 6z" fill="#a87818" stroke="#000" />
          <path d="M9 4q3-3 6 0m0-2v3h-3" fill="none" stroke="#000" />
        </>
      ),
    },
    {
      name: "Save",
      art: (
        <>
          <path d="M2 2h14v13H3l-1-1z" fill="#1818b0" stroke="#000" />
          <path d="M5 2h8v6H5z" fill="#c0c0c0" />
          <path d="M5 10h8v5H5z" fill="#000" />
          <path d="M10 11h2v3h-2z" fill="#fff" />
        </>
      ),
    },
    {
      name: "Acquire",
      art: (
        <>
          <path d="M2 2h14v3l-4 2v3H7V7L2 5z" fill="#fff" stroke="#000" />
          <path d="M4 4h10" stroke="#40b0f0" />
          <path d="M9 10q1 4-3 5" fill="none" stroke="#000" strokeWidth="1.500" />
        </>
      ),
    },
    {
      name: "Print",
      art: (
        <>
          <path d="M5 8V2h8v6" fill="#fff" stroke="#000" />
          <path d="M1 8h16v4H1zM3 12h12v3H3z" fill="#d8d8d8" stroke="#000" />
          <path d="M11 13.500h3" stroke="#e02020" />
        </>
      ),
    },
    {
      name: "Browse",
      art: (
        <>
          <path d="M0 0h6v5H0zM0 6h6v5H0zM0 12h6v5H0z" fill="#e01818" />
          <path d="M12 0h6v5h-6zM12 6h6v5h-6zM12 12h6v5h-6z" fill="#1830e0" />
          <path d="M2 3h2M2 9h2M2 15h2M14 3h2M14 9h2M14 15h2" stroke="#101010" />
          <path d="M7 4h4m-2-2 2 2-2 2M7 13h4m-2-2 2 2-2 2" fill="none" stroke="#000" strokeWidth="1.300" />
        </>
      ),
    },
  ],
  [
    {
      name: "Undo",
      art: <path d="M3 4v6h6M4 9q4-6 9-3 3 5-2 7M5 15h12" fill="none" stroke="#888" strokeWidth="1.300" />,
    },
    {
      name: "Cut",
      art: <path d="M8 1v10l-3 4-2-2 5-3 8-4M8 10l6 5 2-2-8-3" fill="none" stroke="#888" strokeWidth="1.300" />,
    },
    {
      name: "Copy",
      art: (
        <>
          <path d="M2 2h8v12H2z" fill="#fff" stroke="#000" />
          <path d="M8 6h8v10H8z" fill="#fff" stroke="#000" />
          <path d="m4 4 7 6M4 8V4h4" fill="none" stroke="#000" strokeWidth="1.500" />
        </>
      ),
    },
    {
      name: "Paste",
      art: (
        <>
          <path d="M2 3h11v11H2z" fill="#c0c0b0" stroke="#000" />
          <path d="M5 1h5v3H5z" fill="#fff" stroke="#000" />
          <path d="M7 7h9v8H7z" fill="#fff" stroke="#1828a0" />
          <path d="M9 10h5M9 12h5" stroke="#1828a0" />
        </>
      ),
    },
  ],
  [
    {
      name: "Full screen",
      art: (
        <>
          <path d="M2 2h14v9H2z" fill="#f4f4f4" stroke="#000" strokeWidth="1.500" />
          <path d="M3 3h12v2H3z" fill="#60b8f0" />
          <path d="m6 10 3-4 3 4z" fill="#e02020" />
          <path d="M7 12h4v2H7zM4 15h10" fill="#000" stroke="#000" />
        </>
      ),
    },
    { name: "Normal view", art: <path d="M2 9a7 7 0 1 0 14 0 7 7 0 1 0-14 0m2-5 10 10M5 13l8-9" fill="none" stroke="#888" strokeWidth="1.400" /> },
  ],
  [
    { name: "Histogram", art: <path d="M1 15v-4l2-2v2l2-6 1 4 2-5 1 6 2-4 2 4 1-8 2 4v9z" fill="#000" stroke="#000" strokeWidth="0.6" /> },
    { name: "Select", art: <rect x="3" y="3" width="12" height="12" fill="none" stroke="#1838e8" strokeWidth="2.500" strokeDasharray="3 2" /> },
    {
      name: "Brush",
      art: (
        <>
          <path d="m9 9 6-7 2 1-6 8z" fill="#e02020" stroke="#000" strokeWidth="0.6" />
          <path d="m8 9 3 2q-1 4-9 4 4-1 6-6z" fill="#c08820" stroke="#000" strokeWidth="0.8" />
        </>
      ),
    },
    {
      name: "Controls",
      art: (
        <>
          <path d="M1 4h16v10H1z" fill="#e8e8e8" stroke="#101880" strokeWidth="2" />
          <path d="M4 8h4v3H4z" fill="#fff" stroke="#101880" />
        </>
      ),
    },
  ],
];

function Readout({ className, children }: { className?: string; children?: React.ReactNode }) {
  return (
    <div className={clsx("flex h-4 items-center justify-between border border-t-[#888088] border-r-white border-b-white border-l-[#888088] pt-0.5 pl-[3px]", className)}>
      {children}
    </div>
  );
}

function PaintShopPro() {
  return (
    <section className="absolute top-[159px] left-[63px] w-[638px] overflow-hidden rounded-t-[7px] border-x-3 border-b-3 border-[#6a80da] bg-[#c0c0c0]">
      <TitleBar title="Paint Shop Pro" icon={<PspIcon className="h-4 w-4" />} className="h-[30px] bg-[#7892e0] px-0.5" />
      <nav className="flex h-5 items-center gap-[11px] bg-[#ebe7d7] pl-[5px] text-[#a8a594]">
        {["File", "Edit", "View", "Image", "Colors", "Capture", "Window", "Help"].map((m) => (
          <span key={m}>{m}</span>
        ))}
      </nav>
      <div className="h-[29px] border-t border-b border-t-[#1858d8] border-b-black shadow-[inset_0_1px_#fff]">
        <div className="flex gap-[17px] pt-0.5 pl-2.5">
          {toolGroups.map((group) => (
            <div key={group[0].name} className="flex gap-0.5">
              {group.map(({ name, art }) => (
                <button
                  key={name}
                  type="button"
                  aria-label={name}
                  className="flex h-[22px] w-[23px] items-center justify-center rounded-[1px] border border-black bg-[#c0c0c0] shadow-[inset_1px_1px_#fff,inset_-1px_-1px_#808080]"
                >
                  <svg viewBox="0 0 18 18" className="h-[18px] w-[18px]" aria-hidden="true">
                    {art}
                  </svg>
                </button>
              ))}
            </div>
          ))}
        </div>
      </div>
      <div className="ml-px rounded-tl-[7px] border-b-3 border-l-3 border-[#6a80da] bg-[#7892e0]">
        <TitleBar title="New-1.bmp (1:1)" icon={<BmpIcon className="h-4 w-4" />} className="h-[30px] pt-1 pl-1" />
        <div className="mr-1 bg-white">
          <div className="relative h-[326px] overflow-hidden">
            <div className="absolute top-0 left-0 h-[720px] w-[1280px]">
              <Wallpaper />
              <DesktopIcons items={capturedItems} />
              <div className="absolute top-[31px] left-[315px] w-[500px] rounded-t-[7px] bg-[#7088dc]">
                <TitleBar />
              </div>
              <div className="absolute top-[40px] left-[297px] w-[500px] rounded-t-[7px] bg-[#7088dc]">
                <TitleBar title="Poste de travail" icon={<SmallComputer className="h-4 w-4" />} className="pl-2" />
              </div>
              <SystemProperties active className="top-[54px] left-[49px]">
                <AdvancedPage />
              </SystemProperties>
            </div>
          </div>
          <div className="flex h-[18px] items-center bg-[#fbfaf6]">
            <ScrollArrow dir="left" />
            <div className="ml-px flex h-4 w-[17px] items-center justify-center gap-px rounded-[2px] border border-[#b4c8f0] bg-[#c8d8fc]">
              <i className="h-1.5 w-px bg-[#8ca8e8]" />
              <i className="h-1.5 w-px bg-[#8ca8e8]" />
              <i className="h-1.5 w-px bg-[#8ca8e8]" />
              <i className="h-1.5 w-px bg-[#8ca8e8]" />
            </div>
            <ScrollArrow dir="right" className="ml-auto" />
            <i className="h-full w-[17px] bg-[repeating-linear-gradient(#101c78_0_2px,#fff_2px_3px)]" />
          </div>
        </div>
      </div>
      <footer className="flex h-5 items-center gap-[9px] border-t-2 border-black px-1">
        <Readout className="w-[187px]">Image: 1280 x 720 x 16 Million</Readout>
        <Readout className="w-[231px]" />
        <Readout className="grow pr-3.5">
          <span>Image: 2.6M</span>
          <span>Free: 2047.1M</span>
        </Readout>
      </footer>
    </section>
  );
}

/* ---------- taskbar ---------- */

const tasks = [
  { label: "2011-2012", icon: SmallFolder },
  { label: "mes essais python", icon: SmallFolder },
  { label: "Poste de travail", icon: SmallComputer },
  { label: "Paint Shop Pro", icon: PspIcon, current: true },
];

const Grip = () => <i className="h-6 w-[5px] bg-[radial-gradient(circle,#0c2c98_1px,transparent_1px)] bg-[length:3px_4px]" />;

function Taskbar() {
  return (
    <footer className="flex h-[34px] shrink-0 items-end bg-linear-to-b from-[#2c6cd8] via-[#3a86f0] via-10% to-[#1c50c8] text-white">
      <div className="flex h-full w-full items-end bg-linear-to-b from-transparent via-[#2460dc] via-30% to-[#2258d4]">
        <button
          type="button"
          className="flex h-[30px] w-[135px] items-center gap-1.5 rounded-r-[10px] border-t border-r border-t-[#80b078] border-r-[#184818] bg-linear-to-b from-[#6ca868] via-[#40843c] via-30% to-[#3c7c38] pl-2.5"
        >
          <Svg box={20} className="h-[19px] w-[19px]">
            <path d="M3 3q3-2 6 0L8 9Q5 7.500 2 9z" fill="#f06020" />
            <path d="M10.500 3.500q3 2 7 0l-1.500 6q-3 2-6.500 0z" fill="#90c040" />
            <path d="M1.700 10.500q3-1.500 6 0l-1.200 6.500q-3-2-6 0z" fill="#4888f0" />
            <path d="M9 11q3.500 2 6.500 0L14 17q-3 2-6 .3z" fill="#f8c020" />
          </Svg>
          <span className="font-['Open_Sans',sans-serif] text-[17px] leading-none font-bold italic [text-shadow:1px_1px_1px_#183818]">
            démarrer
          </span>
        </button>
        <div className="mb-0.5 ml-2 flex w-3 items-center">
          <Grip />
        </div>
        <div className="mb-[3px] flex gap-0.5">
          {tasks.map(({ label, icon: Icon, current }) => (
            <button
              key={label}
              type="button"
              className={clsx(
                "flex h-[23px] w-[158px] items-center gap-[3px] rounded-[2px] border pl-2 text-left",
                current
                  ? "border-[#123c98] bg-[#1c4cbc] pt-px"
                  : "border-t-[#5c9cf8] border-r-[#1c50c0] border-b-[#2860d0] border-l-[#5c9cf8] bg-[#3a80f0]",
              )}
            >
              <Icon className="h-4 w-4" />
              {label}
            </button>
          ))}
        </div>
        <div className="mb-0.5 ml-auto flex h-6 items-center">
          <Grip />
          <span className="mx-2 bg-[#2c60d0] px-0.5">FR</span>
        </div>
        <div className="relative ml-3 flex h-[30px] w-[110px] items-center gap-0.5 border-l border-[#0c3c98] bg-linear-to-b from-[#20a0f4] to-[#1488e4] pr-3 pl-2.5">
          <button
            type="button"
            aria-label="Afficher les icônes cachées"
            className="absolute top-1.5 -left-2.5 flex h-[18px] w-[18px] items-center justify-center rounded-full border border-[#b0d4f8] bg-linear-to-br from-[#50b0f8] to-[#0c60d0]"
          >
            <svg viewBox="0 0 10 10" className="h-2.5 w-2.5" aria-hidden="true">
              <path d="M7 1 3 5l4 4" fill="none" stroke="#fff" strokeWidth="2" />
            </svg>
          </button>
          <Svg box={16} className="h-4 w-4">
            <rect width="16" height="16" rx="2" fill="url(#java)" />
            <path d="M9 2Q6 4 8 6t0 3M4 9q4 2 8-.5M5 11q3 1 6 0M3 13q5 1.500 10 0M12 9q2 0 0 2" fill="none" stroke="#fff" strokeWidth="1.100" />
          </Svg>
          <Svg box={16} className="h-4 w-4">
            <rect y="2" width="16" height="12" fill="#e01010" />
            <text x="8" y="11.500" fontSize="8" textAnchor="middle" className="font-bold italic" fill="#fff">ATI</text>
          </Svg>
          <AviraIcon className="h-4 w-4" />
          <span className="ml-1">10:10</span>
        </div>
      </div>
    </footer>
  );
}

export default function App() {
  return (
    <div className="flex h-screen flex-col overflow-hidden font-['DejaVu_Sans_Condensed','DejaVu_Sans',sans-serif] text-[11px] text-black">
      <SharedPaints />
      <main className="relative min-h-0 grow overflow-hidden">
        <Wallpaper />
        <DesktopIcons items={desktopItems} />
        <PaintShopPro />
        <Explorer />
        <SystemProperties active={false} className="top-[84px] left-[503px]" />
        <EnvironmentDialog />
      </main>
      <Taskbar />
    </div>
  );
}
